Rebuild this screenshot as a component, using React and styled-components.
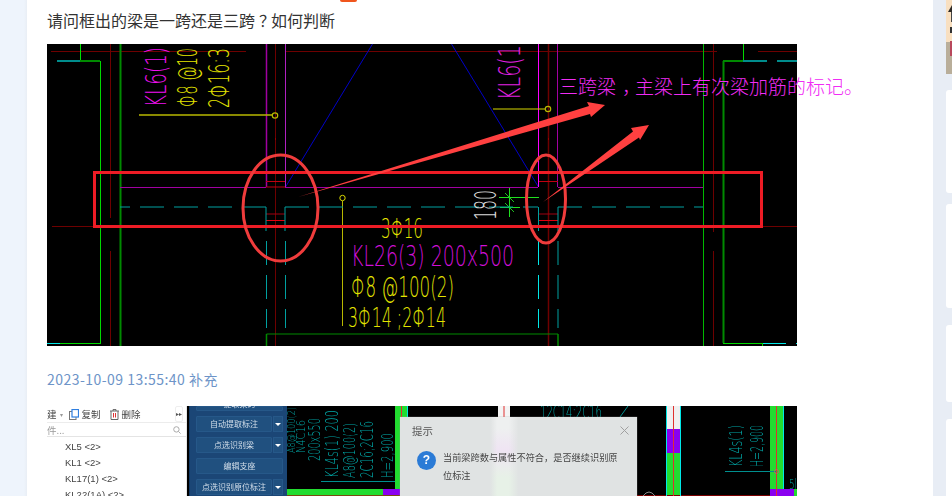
import React from "react";
import styled, { createGlobalStyle } from "styled-components";

const Global = createGlobalStyle`
  html, body { margin: 0; padding: 0; height: 496px; overflow: hidden; background: #e8edf5; }
  body { font-family: "Noto Sans CJK SC", "Liberation Sans", sans-serif; }
`;

const Page = styled.div`
  display: flex;
  width: 952px;
  height: 496px;
  overflow: hidden;
  background: #e8edf5;
`;
const LeftGutter = styled.div`
  flex: 0 0 27px;
  background: linear-gradient(90deg, #eef4fc 0 24px, #e9eef5 27px);
`;
const Main = styled.main`
  flex: 0 0 906px;
  background: #fff;
  padding-left: 20px;
  box-sizing: border-box;
`;
const TopStrip = styled.div`
  height: 2px;
`;
const TopBadge = styled.div`
  width: 17px;
  height: 2px;
  margin-left: 293px;
  background: #f0561d;
  border-radius: 0 0 2px 2px;
`;
const Title = styled.h1`
  margin: 0 0 6px;
  font-size: 16px;
  line-height: 36px;
  font-weight: 400;
  color: #333;
`;
const Punct = styled.span`
  display: inline-block;
  width: 1em;
  height: 1em;
  line-height: 1em;
  box-sizing: border-box;
  padding-left: ${(p) => p.$shift}px;
  white-space: nowrap;
`;
const DrawingFrame = styled.div`
  position: relative;
  width: 750px;
  height: 302px;
  background: #000;
  svg { display: block; }
`;
const Note = styled.span`
  position: absolute;
  left: 512px;
  top: 28px;
  font-size: 19px;
  font-weight: 300;
  line-height: 28px;
  white-space: nowrap;
  color: #f02cf4;
`;
const Stamp = styled.div`
  margin: 23px 0 17px;
  font-size: 14px;
  line-height: 20px;
  letter-spacing: 0.47px;
  color: #6d94c8;
`;
const ShotFrame = styled.div`
  position: relative;
  display: flex;
  width: 750px;
  height: 120px;
  background: #000;
  overflow: hidden;
  filter: blur(0.35px);
`;
const Tree = styled.div`
  flex: 0 0 140px;
  background: #fff;
  border-right: 1px solid #e6e6e6;
  box-sizing: border-box;
  color: #444;
  font-size: 9.5px;
`;
const TreeBar = styled.div`
  display: flex;
  align-items: center;
  height: 16px;
  border-bottom: 1px solid #ececec;
`;
const TreeTool = styled.span`
  display: inline-flex;
  align-items: center;
  gap: 3px;
  margin-left: ${(p) => p.$gap}px;
`;
const TreeCaret = styled.span`
  margin-left: 3px;
  color: #999;
  font-size: 6px;
`;
const Collapse = styled.span`
  margin-left: auto;
  margin-right: 3px;
  width: 6px;
  height: 14px;
  border: 1px solid #eee;
  border-radius: 2px;
  font-size: 6px;
  line-height: 14px;
  text-align: center;
  color: #555;
`;
const TreeSearch = styled.div`
  display: flex;
  align-items: center;
  justify-content: space-between;
  height: 13px;
  padding: 0 5px 0 0;
  border-bottom: 1px solid #e4e4e4;
  color: #999;
`;
const TreeList = styled.ul`
  margin: 0;
  padding: 2px 0 0 18px;
  list-style: none;
`;
const TreeItem = styled.li`
  height: 16px;
  line-height: 16px;
  font-family: "Liberation Sans", sans-serif;
  font-size: 9.5px;
  white-space: nowrap;
`;
const ToolPanel = styled.div`
  flex: 0 0 98px;
  margin-left: 2px;
  box-sizing: border-box;
  padding: 0 4px 0 6px;
  background: #1b4676;
  border-left: 1px solid #123a66;
  display: flex;
  flex-direction: column;
  gap: 5px;
`;
const ToolRow = styled.div`
  display: flex;
  gap: 1px;
  flex: 0 0 ${(p) => p.$h || 16}px;
  overflow: hidden;
`;
const ToolButton = styled.div`
  flex: 1;
  display: flex;
  align-items: ${(p) => (p.$cut ? "flex-end" : "center")};
  justify-content: center;
  background: #20507f;
  border: 1px solid #265889;
  box-sizing: border-box;
  color: #d4dfea;
  font-size: 8px;
  line-height: 12px;
  white-space: nowrap;
  border-radius: 1px;
`;
const ToolCaret = styled.div`
  flex: 0 0 10px;
  display: flex;
  align-items: center;
  justify-content: center;
  background: #20507f;
  border: 1px solid #265889;
  box-sizing: border-box;
  &::after {
    content: "";
    border-left: 3px solid transparent;
    border-right: 3px solid transparent;
    border-top: 3px solid #fff;
  }
`;
const CadArea = styled.div`
  flex: 1;
  svg { display: block; }
`;
const Dialog = styled.div`
  position: absolute;
  left: 353px;
  top: 11px;
  width: 237px;
  height: 110px;
  box-sizing: border-box;
  padding: 0 12px;
  background:
    linear-gradient(90deg, #e0e3e3 38%, rgba(224,227,227,0) 41%, rgba(224,227,227,0) 46%, #e0e3e3 50%),
    linear-gradient(180deg, #eef0f0 0 10%, #efe4f3 30%, #e7f1e7 55%);
  color: #444;
  box-shadow: 0 0 1px #999;
`;
const DialogHead = styled.div`
  display: flex;
  justify-content: space-between;
  align-items: center;
  height: 26px;
  font-size: 10.5px;
  color: #555;
  svg { margin-right: -4px; }
`;
const DialogBody = styled.div`
  display: flex;
  gap: 7px;
  margin-top: 1px;
  margin-left: 5px;
`;
const Help = styled.span`
  flex: 0 0 19px;
  height: 19px;
  margin-top: 7px;
  border-radius: 50%;
  background: #2b7bd6;
  color: #fff;
  font: 700 12px/19px "Liberation Sans", sans-serif;
  text-align: center;
`;
const DialogText = styled.p`
  margin: 4px 0 0;
  width: 180px;
  font-size: 9.2px;
  line-height: 18px;
`;
const Sidebar = styled.aside`
  flex: 0 0 6px;
  margin-left: 13px;
  display: flex;
  flex-direction: column;
`;
const Thumb = styled.div`
  height: 74px;
  margin-bottom: 16px;
  svg { display: block; }
`;
const SideCard = styled.div`
  height: ${(p) => p.$h}px;
  margin-bottom: ${(p) => p.$mb}px;
  flex: none;
  background: #fff;
  border-radius: 3px 0 0 3px;
`;

const C = {
  red: "#6e0000",
  green: "#00c000",
  dkgreen: "#008a00",
  teal: "#00a0a0",
  cyan: "#00e8e8",
  purple: "#a000a0",
  magenta: "#f010f0",
  yellow: "#b8b800",
  label: "#e4e400",
  blue: "#0000c8",
  mark: "#ee1c25",
  ink: "#f03c3c",
  arrow: "#ff4040",
};

const L = ({ p, c, w = 1, d }) => (
  <line x1={p[0]} y1={p[1]} x2={p[2]} y2={p[3]} stroke={c} strokeWidth={w} strokeDasharray={d} />
);

const CadText = ({ x, y, len, size = 30, color, rotate, children }) => (
  <text
    transform={`translate(${x} ${y})${rotate ? " rotate(-90)" : ""}`}
    textLength={len}
    lengthAdjust="spacingAndGlyphs"
    fontFamily={`"DejaVu Sans", sans-serif`}
    fontSize={size}
    fill={color}
    fontWeight="200"
  >
    {children}
  </text>
);

const lines = [
  [[51, 51.5, 246, 51.5], C.red],
  [[286, 51.5, 717, 51.5], C.red],
  [[758, 51.5, 797, 51.5], C.red],
  [[110.5, 44, 110.5, 218], C.red],
  [[110.5, 251, 110.5, 346], C.red],
  [[713.5, 44, 713.5, 232], C.red],
  [[713.5, 251, 713.5, 346], C.red],
  [[275.5, 44, 275.5, 346], C.red],
  [[548.5, 44, 548.5, 346], C.red, 1.5],
  [[52, 226.5, 93, 226.5], C.red],
  [[763, 226.5, 797, 226.5], C.red],
  [[372.5, 44, 285.5, 187], C.blue],
  [[451.5, 44, 538.5, 187], C.blue],
  [[80.5, 44, 80.5, 61], "#00e000"],
  [[57, 61, 80, 61], "#008c8c", 2],
  [[80, 61, 100, 61], C.dkgreen, 2],
  [[100.5, 61, 100.5, 343], "#00d800"],
  [[120.5, 44, 120.5, 346], C.dkgreen, 2],
  [[47, 343.5, 60, 343.5], C.cyan],
  [[60, 343.5, 101, 343.5], "#00d800"],
  [[743.5, 44, 743.5, 61], "#00d800"],
  [[723, 61, 743, 61], C.dkgreen, 2],
  [[743, 61, 767, 61], "#008c8c", 2],
  [[777, 61, 797, 61], "#008c8c", 2],
  [[703.5, 44, 703.5, 346], "#00b800"],
  [[723.5, 61, 723.5, 343], C.dkgreen, 2],
  [[723, 343.5, 762, 343.5], "#00d800"],
  [[762.5, 343, 762.5, 346], "#00d800"],
  [[763, 343.5, 786, 343.5], C.cyan],
  [[796, 343.5, 797, 343.5], C.cyan],
  [[266.5, 44, 266.5, 187], C.purple, 1.5],
  [[285.5, 44, 285.5, 187], "#b020c0", 1],
  [[538.5, 44, 538.5, 187], "#ff00ff", 1],
  [[557.5, 44, 557.5, 187], C.purple, 1],
  [[120, 187.5, 266, 187.5], C.purple],
  [[285, 187.5, 538, 187.5], C.purple],
  [[558, 187.5, 703, 187.5], C.purple],
  [[139, 115, 272, 115], C.yellow, 1.5],
  [[493, 109, 545, 109], "#d8d800", 1],
  [[342.5, 201, 342.5, 326], C.yellow],
  [[266.5, 334, 558, 334], C.dkgreen],
  [[266.5, 334, 266.5, 346], C.dkgreen, 1.5],
  [[558, 334, 558, 346], C.dkgreen, 1.5],
  [[266, 181.5, 285, 181.5], "#c00010"],
  [[266, 187, 285, 187], "#c00010"],
  [[266, 214, 285, 214], "#a00010"],
  [[266, 220.5, 285, 220.5], "#e00010"],
  [[539, 181.5, 558, 181.5], "#c00010"],
  [[539, 214, 558, 214], "#a00010"],
  [[539, 220.5, 558, 220.5], "#e00010"],
  [[266, 207, 266, 231], C.teal],
  [[285, 207, 285, 231], C.teal],
  [[538.5, 207, 538.5, 231], C.teal],
  [[558, 207, 558, 231], C.teal],
  [[509.5, 188, 509.5, 217], "#20e020"],
  [[499, 197.5, 539, 197.5], "#20e020"],
  [[500, 207.5, 520, 207.5], "#20e020"],
  [[505, 193, 514, 202], "#20c020"],
  [[505, 203, 514, 212], "#20c020"],
];

const dashesV = [266.5, 285.5].flatMap((x) => [
  [[x, 241, x, 265], C.teal],
  [[x, 275, x, 299], C.teal],
  [[x, 309, x, 328], C.teal],
]);
const dashesR = [
  [[538.5, 241, 538.5, 265], C.cyan],
  [[538.5, 275, 538.5, 299], C.cyan],
  [[538.5, 309, 538.5, 328], C.cyan],
  [[558, 241, 558, 265], C.teal],
  [[558, 275, 558, 299], C.teal],
  [[558, 309, 558, 328], C.teal],
];

const BeamDrawing = () => (
  <svg width="750" height="302" viewBox="47 44 750 302">
    {[...lines, ...dashesV, ...dashesR].map(([p, c, w], i) => (
      <L key={i} p={p} c={c} w={w} />
    ))}
    <L p={[266, 207, 120, 207]} c={C.teal} w={1.2} d="24 10" />
    <L p={[285, 207, 538, 207]} c={C.teal} w={1.2} d="24 10" />
    <L p={[558, 207, 703, 207]} c={C.teal} w={1.2} d="24 10" />
    <circle cx="275" cy="115.5" r="2.7" fill="none" stroke={C.yellow} strokeWidth="1.2" />
    <circle cx="548" cy="109" r="2.7" fill="none" stroke={C.yellow} strokeWidth="1.2" />
    <circle cx="342.5" cy="198" r="2.7" fill="none" stroke="#d8d800" />
    <rect x="275" y="138" width="1" height="2" fill="#900" />
    <rect x="548" y="138" width="1" height="2" fill="#900" />

    <CadText x={166} y={107} len={60} size={29} color={C.magenta} rotate>KL6(1)</CadText>
    <CadText x={197} y={107} len={59} size={27} color={C.label} rotate>Φ8 @10</CadText>
    <CadText x={229} y={108} len={60} size={28} color={C.label} rotate>2Φ16:3</CadText>
    <CadText x={520} y={100} len={55} size={30} color="#e020e0" rotate>KL6(1</CadText>
    <CadText x={381} y={238} len={42} size={27} color={C.label}>3Φ16</CadText>
    <CadText x={351} y={266} len={163} size={29} color="#d010d8">KL26(3) 200x500</CadText>
    <CadText x={351} y={297} len={103} size={29} color={C.label}>Φ8 @100(2)</CadText>
    <CadText x={348} y={327} len={98} size={27} color={C.label}>3Φ14 ;2Φ14</CadText>
    <CadText x={496} y={220} len={30} size={30} color="#d8d8d8" rotate>180</CadText>

    <rect x="94.5" y="172.5" width="667" height="54" fill="none" stroke={C.mark} strokeWidth="3" />
    <ellipse cx="280.5" cy="208" rx="37.5" ry="53" fill="none" stroke={C.ink} strokeWidth="3" />
    <ellipse cx="546" cy="199" rx="19.5" ry="44" fill="none" stroke={C.ink} strokeWidth="3" />
    <polygon points="605,105 587,102 589,106 298,197 590,114 591,117" fill={C.arrow} />
    <polygon points="649,125 631,128 633,131.5 543,202 639,137.5 640,140" fill={C.arrow} />
  </svg>
);

const CopyIcon = () => (
  <svg width="10" height="11" viewBox="0 0 10 11">
    <rect x="0.5" y="2.5" width="6.5" height="8" fill="#fff" stroke="#777" />
    <rect x="3" y="0.5" width="6.5" height="7.5" fill="#fff" stroke="#2f7fe0" strokeWidth="1.2" />
  </svg>
);
const TrashIcon = () => (
  <svg width="9" height="11" viewBox="0 0 9 11">
    <path d="M0 2h9M3 2V.6h3V2M1 2v8.5h7V2" fill="none" stroke="#666" />
    <path d="M3.5 4v4.5M5.5 4v4.5" stroke="#d33" />
  </svg>
);
const SearchIcon = () => (
  <svg width="8" height="8" viewBox="0 0 8 8">
    <circle cx="3.4" cy="3.4" r="2.7" fill="none" stroke="#aaa" />
    <path d="M5.4 5.4 7.6 7.6" stroke="#aaa" />
  </svg>
);
const CloseIcon = () => (
  <svg width="9" height="9" viewBox="0 0 9 9">
    <path d="M.5.5l8 8M8.5.5l-8 8" stroke="#a0a0a0" fill="none" />
  </svg>
);
const ThumbArt = () => (
  <svg width="6" height="74" viewBox="0 0 6 74">
    <rect width="6" height="42" fill="#f8dfc0" />
    <rect y="42" width="6" height="32" fill="#b9ae9a" />
    <path d="M2 12 6 5v7z" fill="#2e2a26" />
    <rect x="5" y="12" width="1" height="10" fill="#444" />
    <rect x="4" y="27" width="2" height="6" fill="#333" />
    <rect x="4" y="41" width="2" height="15" fill="#b8485c" />
  </svg>
);

const rects = [
  [395, 406, 12, 83, "#22dc30"],
  [407, 406, 1, 83, C.cyan],
  [498, 406, 12, 30, "#f4f4f4"],
  [667, 406, 13, 23, "#f0f0f0"],
  [667, 429, 13, 24, "#8a00f0"],
  [667, 453, 13, 42, "#22dc30"],
  [770, 406, 13, 83, "#22dc30"],
  [783, 406, 1, 83, C.cyan],
  [770, 489, 24, 7, "#8a00f0"],
  [794, 489, 3, 7, "#22dc30"],
  [287, 489, 96, 6, "#22dc30"],
  [383, 489, 17, 6, "#8a00f0"],
  [287, 495, 113, 1, "#7a4a10"],
  [637, 495, 133, 1, "#7a0000"],
];

const CadShot = () => (
  <svg width="510" height="120" viewBox="287 406 510 120">
    {rects.map(([x, y, w, h, f], i) => (
      <rect key={i} x={x} y={y} width={w} height={h} fill={f} />
    ))}
    <L p={[401.5, 406, 401.5, 496]} c="#e03030" />
    <L p={[504, 406, 504, 418]} c="#e03030" />
    <L p={[673.5, 406, 673.5, 496]} c="#e03030" />
    <L p={[776.5, 406, 776.5, 496]} c="#e03030" />
    <L p={[666.5, 406, 666.5, 496]} c={C.cyan} />
    <L p={[680.5, 406, 680.5, 496]} c={C.cyan} />
    <L p={[321, 481.5, 395, 481.5]} c="#008f8f" />
    <L p={[725, 471.5, 776, 471.5]} c="#008f8f" />
    <circle cx="776.5" cy="471.5" r="2" fill="none" stroke="#c06060" />
    <L p={[620, 417, 628, 406]} c="#008f8f" />
    <CadText x={295} y={453} len={46} size={11} color="#00a0a0" rotate>A8@100(2)</CadText>
    <CadText x={305} y={453} len={33} size={12} color="#00a8a8" rotate>N4C16</CadText>
    <CadText x={320} y={461} len={43} size={16} color="#00a8a8" rotate>200x550</CadText>
    <CadText x={338} y={478} len={68} size={17} color="#00a8a8" rotate>KL4s(1)  200</CadText>
    <CadText x={355} y={478} len={55} size={15} color="#00a8a8" rotate>A8@100(2)</CadText>
    <CadText x={373} y={478} len={57} size={17} color="#00a8a8" rotate>2C16;2C16</CadText>
    <CadText x={393} y={478} len={45} size={15} color="#00a8a8" rotate>H=2,900</CadText>
    <CadText x={742} y={467} len={42} size={17} color="#00a8a8" rotate>KL4s(1)</CadText>
    <CadText x={763} y={467} len={42} size={17} color="#00a8a8" rotate>H=2,900</CadText>
    <CadText x={540} y={418} len={62} size={17} color="#00a8a8">12C14;2C16</CadText>
    <CadText x={789} y={489} len={8} size={14} color="#00a8a8">5l</CadText>
    <path d="M643 496 q6-8 12 0" fill="none" stroke="#888" />
  </svg>
);

const treeItems = ["XL5 <2>", "KL1 <2>", "KL17(1) <2>", "KL22(1A) <2>", "KL23 <2>"];

export default function App() {
  return (
    <>
      <Global />
      <Page>
        <LeftGutter />
        <Main>
          <TopStrip>
            <TopBadge />
          </TopStrip>
          <Title>
            请问框出的梁是一跨还是三跨<Punct $shift={4}>？</Punct>如何判断
          </Title>
          <DrawingFrame>
            <BeamDrawing />
            <Note>
              三跨梁<Punct $shift={6}>，</Punct>主梁上有次梁加筋的标记。
            </Note>
          </DrawingFrame>
          <Stamp>2023-10-09 13:55:40 补充</Stamp>
          <ShotFrame>
            <Tree>
              <TreeBar>
                <span>建</span>
                <TreeCaret>▾</TreeCaret>
                <TreeTool $gap={6}>
                  <CopyIcon />
                  复制
                </TreeTool>
                <TreeTool $gap={9}>
                  <TrashIcon />
                  删除
                </TreeTool>
                <Collapse>▸▸</Collapse>
              </TreeBar>
              <TreeSearch>
                <span>件...</span>
                <SearchIcon />
              </TreeSearch>
              <TreeList>
                {treeItems.map((t) => (
                  <TreeItem key={t}>{t}</TreeItem>
                ))}
              </TreeList>
            </Tree>
            <ToolPanel>
              <ToolRow $h={5}>
                <ToolButton $cut>提取梁跨</ToolButton>
              </ToolRow>
              <ToolRow>
                <ToolButton>自动提取标注</ToolButton>
                <ToolCaret />
              </ToolRow>
              <ToolRow>
                <ToolButton>点选识别梁</ToolButton>
                <ToolCaret />
              </ToolRow>
              <ToolRow>
                <ToolButton>编辑支座</ToolButton>
              </ToolRow>
              <ToolRow>
                <ToolButton>点选识别原位标注</ToolButton>
                <ToolCaret />
              </ToolRow>
            </ToolPanel>
            <CadArea>
              <CadShot />
            </CadArea>
            <Dialog>
              <DialogHead>
                提示
                <CloseIcon />
              </DialogHead>
              <DialogBody>
                <Help>?</Help>
                <DialogText>当前梁跨数与属性不符合，是否继续识别原位标注</DialogText>
              </DialogBody>
            </Dialog>
          </ShotFrame>
        </Main>
        <Sidebar>
          <Thumb>
            <ThumbArt />
          </Thumb>
          <SideCard $h={103} $mb={11} />
          <SideCard $h={104} $mb={17} />
          <SideCard $h={77} $mb={17} />
          <SideCard $h={100} $mb={0} />
        </Sidebar>
      </Page>
    </>
  );
}
